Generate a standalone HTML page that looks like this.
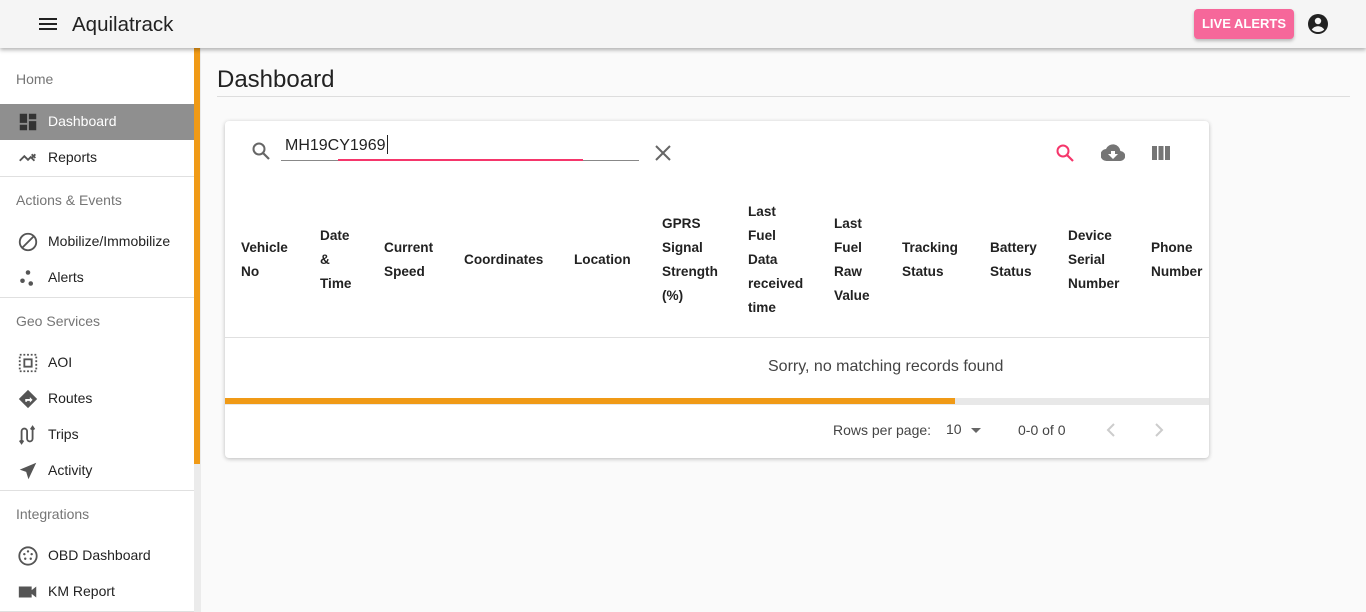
<!DOCTYPE html>
<html><head><meta charset="utf-8"><style>
*{box-sizing:border-box;margin:0;padding:0}
body{width:1366px;height:612px;overflow:hidden;background:#fafafa;font-family:"Liberation Sans",Roboto,sans-serif;position:relative;color:rgba(0,0,0,.87)}
.abs{position:absolute}
.hdr{left:0;top:0;width:1366px;height:48px;background:#f5f5f5;box-shadow:0 2px 4px rgba(0,0,0,.3);z-index:5}
.side{left:0;top:48px;width:194px;height:564px;background:#fff}
.sec{position:absolute;left:16px;font-size:14px;color:#757575}
.it{position:absolute;left:0;width:194px;height:36px;font-size:14px;color:#222}
.it span{position:absolute;left:48px;top:9px}
.it svg{position:absolute;left:17px;top:7px}
.hr{position:absolute;left:0;width:194px;height:1px;background:#e0e0e0}
.th{position:absolute;font-size:13.6px;font-weight:bold;line-height:24px;color:#222}
</style></head><body>
<div class="abs hdr">
<svg class="abs" style="left:36px;top:12px" width="24" height="24" viewBox="0 0 24 24"><path d="M3 6h18v2H3zM3 11h18v2H3zM3 16h18v2H3z" fill="#222"/></svg>
<div class="abs" style="left:72px;top:13px;font-size:20.5px;color:#222">Aquilatrack</div>
<div class="abs" style="left:1194px;top:9px;width:100px;height:30px;background:#f6679a;border-radius:4px;color:#fff;font-size:13px;font-weight:bold;text-align:center;line-height:30px;box-shadow:0 2px 3px rgba(0,0,0,.25)">LIVE ALERTS</div>
<svg class="abs" style="left:1306px;top:12px" width="24" height="24" viewBox="0 0 24 24"><circle cx="12" cy="12" r="10" fill="#222"/><circle cx="12" cy="9" r="3.2" fill="#f5f5f5"/><path d="M5.8 17.5c1.5-2.3 3.8-3.3 6.2-3.3s4.7 1 6.2 3.3C16.7 19.1 14.5 20 12 20s-4.7-.9-6.2-2.5z" fill="#f5f5f5"/></svg>
</div>
<div class="abs side">
<div class="sec" style="top:23px">Home</div>
<div class="it" style="top:56px;background:#8f8f8f;color:#fff"><svg width="22" height="22" viewBox="0 0 24 24"><path d="M3 13h8V3H3zm0 8h8v-6H3zm10 0h8V11h-8zm0-18v6h8V3z" fill="#333"/></svg><span>Dashboard</span></div>
<div class="it" style="top:92px"><svg width="22" height="22" viewBox="0 0 24 24"><path d="M3 15l5-5 4 4 3-3 4 4M16 8l4 4M20 8l-4 4" stroke="#555" stroke-width="2" fill="none"/></svg><span>Reports</span></div>
<div class="hr" style="top:128px"></div>
<div class="sec" style="top:144px">Actions &amp; Events</div>
<div class="it" style="top:176px"><svg width="22" height="22" viewBox="0 0 24 24"><circle cx="12" cy="12" r="9" stroke="#555" stroke-width="2" fill="none"/><path d="M6 18L18 6" stroke="#555" stroke-width="2"/></svg><span>Mobilize/Immobilize</span></div>
<div class="it" style="top:212px"><svg width="22" height="22" viewBox="0 0 24 24"><circle cx="12" cy="6" r="2.5" fill="#555"/><circle cx="6" cy="15" r="2.5" fill="#555"/><circle cx="15" cy="18" r="2.5" fill="#555"/></svg><span>Alerts</span></div>
<div class="hr" style="top:249px"></div>
<div class="sec" style="top:265px">Geo Services</div>
<div class="it" style="top:297px"><svg width="22" height="22" viewBox="0 0 24 24"><rect x="3" y="3" width="18" height="18" stroke="#555" stroke-width="2" stroke-dasharray="2 2" fill="none"/><rect x="8" y="8" width="8" height="8" stroke="#555" stroke-width="2" fill="none"/></svg><span>AOI</span></div>
<div class="it" style="top:333px"><svg width="22" height="22" viewBox="0 0 24 24"><path d="M12 2l10 10-10 10L2 12z" fill="#555"/><path d="M9 15v-3h5v-2l3 3-3 3v-2h-3v1z" fill="#fff"/></svg><span>Routes</span></div>
<div class="it" style="top:369px"><svg width="22" height="22" viewBox="0 0 24 24"><path d="M5 20V8a3 3 0 016 0v8a3 3 0 006 0V4M3 18l2 3 2-3M15 6l2-3 2 3" stroke="#555" stroke-width="2" fill="none"/></svg><span>Trips</span></div>
<div class="it" style="top:405px"><svg width="22" height="22" viewBox="0 0 24 24"><path d="M21 3L3 10.5l7 2.5 2.5 8z" fill="#555"/></svg><span>Activity</span></div>
<div class="hr" style="top:442px"></div>
<div class="sec" style="top:458px">Integrations</div>
<div class="it" style="top:490px"><svg width="22" height="22" viewBox="0 0 24 24"><circle cx="12" cy="12" r="9.5" stroke="#555" stroke-width="2" fill="none"/><circle cx="8" cy="10" r="1.3" fill="#555"/><circle cx="16" cy="10" r="1.3" fill="#555"/><circle cx="12" cy="7" r="1.3" fill="#555"/><circle cx="9" cy="15" r="1.3" fill="#555"/><circle cx="15" cy="15" r="1.3" fill="#555"/></svg><span>OBD Dashboard</span></div>
<div class="it" style="top:526px"><svg width="22" height="22" viewBox="0 0 24 24"><path d="M2 6h14v12H2zM16 10l5-4v12l-5-4z" fill="#555"/></svg><span>KM Report</span></div>
<div class="hr" style="top:563px"></div>
</div>
<div class="abs" style="left:194px;top:48px;width:7px;height:564px;background:#ebebeb"></div>
<div class="abs" style="left:194px;top:48px;width:6px;height:416px;background:#f09a16"></div>
<div class="abs" style="left:217px;top:66px;font-size:24px;color:#222">Dashboard</div>
<div class="abs" style="left:217px;top:96px;width:1133px;height:1px;background:#ddd"></div>
<div class="abs" style="left:225px;top:121px;width:984px;height:337px;background:#fff;border-radius:4px;box-shadow:0 1px 4px rgba(0,0,0,.25)">
<svg class="abs" style="left:24px;top:18px" width="24" height="24" viewBox="0 0 24 24"><circle cx="10" cy="10" r="5.5" stroke="#666" stroke-width="2" fill="none"/><path d="M14 14l6 6" stroke="#666" stroke-width="2.2"/></svg>
<div class="abs" style="left:60px;top:14px;font-size:16px;color:#222">MH19CY1969<span style="display:inline-block;width:1px;height:19px;background:#222;vertical-align:-4px;margin-left:1px"></span></div>
<div class="abs" style="left:56px;top:39px;width:358px;height:1px;background:#888"></div>
<div class="abs" style="left:113px;top:38px;width:245px;height:2px;background:#f5366b"></div>
<svg class="abs" style="left:426px;top:20px" width="24" height="24" viewBox="0 0 24 24"><path d="M5 5l14 14M19 5L5 19" stroke="#666" stroke-width="2"/></svg>
<svg class="abs" style="left:828px;top:20px" width="24" height="24" viewBox="0 0 24 24"><circle cx="10" cy="10" r="5.5" stroke="#f5366b" stroke-width="2" fill="none"/><path d="M14 14l6 6" stroke="#f5366b" stroke-width="2.2"/></svg>
<svg class="abs" style="left:876px;top:20px" width="24" height="24" viewBox="0 0 24 24"><path d="M19.4 10A7.5 7.5 0 005 8 6 6 0 006 20h13a5 5 0 00.4-10z" fill="#757575"/><path d="M10 10h4v3h3l-5 5-5-5h3z" fill="#fff"/></svg>
<svg class="abs" style="left:924px;top:20px" width="24" height="24" viewBox="0 0 24 24"><path d="M3 5h5v14H3zM9.5 5h5v14h-5zM16 5h5v14h-5z" fill="#757575"/></svg>
<div class="th" style="left:16px;top:115px">Vehicle<br>No</div>
<div class="th" style="left:95px;top:103px">Date<br>&amp;<br>Time</div>
<div class="th" style="left:159px;top:115px">Current<br>Speed</div>
<div class="th" style="left:239px;top:127px">Coordinates</div>
<div class="th" style="left:349px;top:127px">Location</div>
<div class="th" style="left:437px;top:91px">GPRS<br>Signal<br>Strength<br>(%)</div>
<div class="th" style="left:523px;top:79px">Last<br>Fuel<br>Data<br>received<br>time</div>
<div class="th" style="left:609px;top:91px">Last<br>Fuel<br>Raw<br>Value</div>
<div class="th" style="left:677px;top:115px">Tracking<br>Status</div>
<div class="th" style="left:765px;top:115px">Battery<br>Status</div>
<div class="th" style="left:843px;top:103px">Device<br>Serial<br>Number</div>
<div class="th" style="left:926px;top:115px">Phone<br>Number</div>
<div class="abs" style="left:0;top:216px;width:984px;height:1px;background:#e0e0e0"></div>
<div class="abs" style="left:543px;top:237px;font-size:16px;color:#444">Sorry, no matching records found</div>
<div class="abs" style="left:0;top:277px;width:984px;height:7px;background:#e8e8e8"></div>
<div class="abs" style="left:0;top:277px;width:730px;height:6px;background:#f09a16"></div>
<div class="abs" style="left:608px;top:301px;font-size:14px;color:#444">Rows per page:</div>
<div class="abs" style="left:721px;top:300px;font-size:14px;color:#444">10</div>
<div class="abs" style="left:746px;top:307px;border:5px solid transparent;border-top-color:#666;border-bottom:0"></div>
<div class="abs" style="left:793px;top:301px;font-size:14px;color:#444">0-0 of 0</div>
<svg class="abs" style="left:874px;top:297px" width="24" height="24" viewBox="0 0 24 24"><path d="M15 6l-6 6 6 6" stroke="#ccc" stroke-width="2" fill="none"/></svg>
<svg class="abs" style="left:922px;top:297px" width="24" height="24" viewBox="0 0 24 24"><path d="M9 6l6 6-6 6" stroke="#ccc" stroke-width="2" fill="none"/></svg>
</div>
</body></html>
